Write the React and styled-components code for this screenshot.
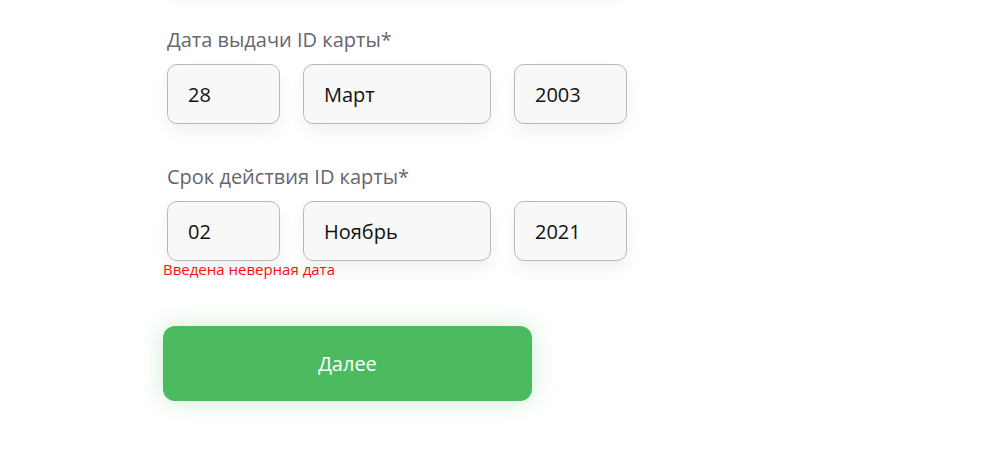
import React from "react";
import styled, { createGlobalStyle } from "styled-components";

const Global = createGlobalStyle`
  html, body { margin: 0; padding: 0; background: #ffffff; }
  body { font-family: "Open Sans", "Noto Sans", sans-serif; overflow: hidden; }
`;

const Page = styled.div`
  width: 981px;
  height: 463px;
  overflow: hidden;
  background: #fff;
`;

const Form = styled.form`
  display: flex;
  flex-direction: column;
  margin-left: 163px;
  width: 470px;
  margin-top: -62px;
`;

const PrevField = styled.div`
  margin-left: 4px;
  width: 460px;
  height: 60px;
  border-radius: 10px;
  background: #fff;
  box-shadow: 0 2px 12px rgba(0, 0, 0, 0.05);
`;

const Label = styled.div`
  margin-left: 4px;
  margin-top: ${(p) => p.$top}px;
  margin-bottom: 11px;
  font-size: 20px;
  line-height: 27px;
  color: #66666c;
`;

const Row = styled.div`
  display: flex;
  gap: 23px;
  margin-left: 4px;
`;

const Field = styled.div`
  box-sizing: border-box;
  width: ${(p) => p.$w}px;
  height: 60px;
  padding: 0 20px;
  display: flex;
  align-items: center;
  border: 1px solid #b9b9b9;
  border-radius: 10px;
  background: #f8f8f8;
  box-shadow: 0 8px 16px rgba(0, 0, 0, 0.06);
  font-size: 20px;
  color: #111;
`;

const Error = styled.div`
  font-size: 15px;
  line-height: 16px;
  color: #ff0d0d;
`;

const Button = styled.button`
  margin-top: 49px;
  width: 369px;
  height: 75px;
  border: none;
  border-radius: 12px;
  background: #4cba5e;
  color: #fff;
  font-family: "Open Sans", "Noto Sans", sans-serif;
  font-size: 20px;
  box-shadow: 0 0 22px rgba(76, 200, 94, 0.3);
  cursor: pointer;
`;

export default function App() {
  return (
    <Page>
      <Global />
      <Form onSubmit={(e) => e.preventDefault()}>
        <PrevField />
        <Label $top={28}>Дата выдачи ID карты*</Label>
        <Row>
          <Field $w={113}>28</Field>
          <Field $w={188}>Март</Field>
          <Field $w={113}>2003</Field>
        </Row>
        <Label $top={39}>Срок действия ID карты*</Label>
        <Row>
          <Field $w={113}>02</Field>
          <Field $w={188}>Ноябрь</Field>
          <Field $w={113}>2021</Field>
        </Row>
        <Error>Введена неверная дата</Error>
        <Button type="submit">Далее</Button>
      </Form>
    </Page>
  );
}
